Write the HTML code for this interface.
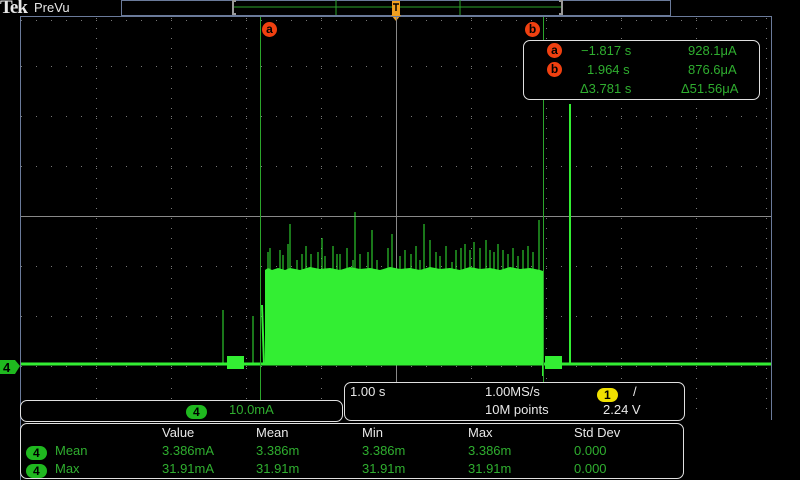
<!DOCTYPE html>
<html><head><meta charset="utf-8"><style>
body{margin:0;background:#000;width:800px;height:480px;overflow:hidden;position:relative;font-family:"Liberation Sans",sans-serif;}
.t{position:absolute;font-size:13px;white-space:nowrap;}
.g{color:#2fae2f}.w{color:#e8e8e8}
.box{position:absolute;border:1px solid #e0e0e0;border-radius:7px;}
.pill{display:inline-block;background:#1fb81f;color:#000;border-radius:7px;font-weight:bold;font-size:12px;line-height:12px;padding:0 5px;}
.cur{display:inline-block;width:15px;height:15px;border-radius:50%;background:#f04010;color:#000;font-weight:bold;font-size:12px;line-height:14px;text-align:center;}
</style></head><body>
<svg width="800" height="480" style="position:absolute;left:0;top:0">
 <rect x="121.5" y="0.5" width="549" height="15" fill="none" stroke="#6a7a9a"/>
 <line x1="233" y1="7" x2="562" y2="7" stroke="#2ba52b"/>
 <line x1="336" y1="0" x2="336" y2="15" stroke="#2ba52b"/>
 <line x1="460" y1="0" x2="460" y2="15" stroke="#2ba52b"/>
 <path d="M236 1h-3v13h3M559 1h3v13h-3" fill="none" stroke="#999" stroke-width="2"/>
 <rect x="392" y="1" width="8" height="14" fill="#f0a020"/>
 <path d="M391 15h10l-5 6z" fill="#f0a020"/>
 <path d="M393 4h6M396 4v7" stroke="#000" stroke-width="1.5"/>
 <path d="M20.5 480V16.5H771.5V420" fill="none" stroke="#6a7a9a"/>
 <g stroke="#777" stroke-width="1">
  <g stroke-dasharray="1 14" >
   <line x1="21" y1="66.5" x2="771" y2="66.5"/><line x1="21" y1="116.5" x2="771" y2="116.5"/><line x1="21" y1="166.5" x2="771" y2="166.5"/><line x1="21" y1="266.5" x2="771" y2="266.5"/><line x1="21" y1="316.5" x2="771" y2="316.5"/><line x1="21" y1="366.5" x2="771" y2="366.5"/>
   <line x1="21" y1="20.5" x2="771" y2="20.5"/>
  </g>
  <g stroke-dasharray="1 9">
   <line x1="96.5" y1="18" x2="96.5" y2="416"/><line x1="171.5" y1="18" x2="171.5" y2="416"/><line x1="246.5" y1="18" x2="246.5" y2="416"/><line x1="321.5" y1="18" x2="321.5" y2="416"/><line x1="471.5" y1="18" x2="471.5" y2="416"/><line x1="546.5" y1="18" x2="546.5" y2="416"/><line x1="621.5" y1="18" x2="621.5" y2="416"/><line x1="696.5" y1="18" x2="696.5" y2="416"/><line x1="766.5" y1="18" x2="766.5" y2="416"/>
  </g>
  <line x1="21" y1="216.5" x2="771" y2="216.5" stroke="#888"/>
  <line x1="396.5" y1="17" x2="396.5" y2="420" stroke="#888"/>
 </g>
 <g stroke="#33ee33">
  <line x1="21" y1="364" x2="771" y2="364" stroke-width="3"/>
  <rect x="227" y="356" width="17" height="13" fill="#33ee33" stroke="none"/>
  <rect x="545" y="356" width="17" height="13" fill="#33ee33" stroke="none"/>
  <line x1="223" y1="310" x2="223" y2="364"/><line x1="253" y1="316" x2="253" y2="364"/>
  <line x1="262" y1="305" x2="264" y2="364" stroke-width="2"/>
  <line x1="570" y1="104" x2="570" y2="364" stroke-width="2"/>
  <line x1="543" y1="360" x2="543" y2="376" stroke-width="2"/>
  <path d="M265 364V270L268 268 272 270 278 268 285 270 290 268 300 270 310 267 320 269 330 268 340 270 350 267 360 269 370 268 380 270 390 267 400 269 410 268 420 270 430 267 440 269 450 268 460 270 470 267 480 269 490 268 500 270 510 267 520 269 530 268 540 270 543 271V364Z" fill="#33ee33" stroke="none"/>
  <path d="M268 252V270M270 248V270M280 250V270M283 255V270M288 244V270M290 224V270M297 260V270M302 254V270M306 246V270M311 254V270M318 252V270M322 238V270M325 256V270M333 246V270M337 254V270M340 254V270M347 248V270M353 260V270M355 212V270M360 254V270M368 252V270M372 230V270M377 260V270M388 248V270M392 234V270M400 256V270M405 250V270M411 254V270M416 246V270M420 260V270M424 224V270M430 240V270M436 252V270M440 256V270M446 246V270M452 262V270M456 250V270M461 248V270M465 244V270M470 250V270M474 242V270M480 248V270M486 240V270M490 250V270M494 252V270M498 244V270M503 250V270M508 254V270M513 248V270M518 256V270M523 250V270M528 246V270M533 252V270M539 220V270" stroke-width="1"/>
 </g>
 <line x1="260.5" y1="17" x2="260.5" y2="400" stroke="#2ba52b"/>
 <line x1="543.5" y1="17" x2="543.5" y2="382" stroke="#2ba52b"/>
 <path d="M0 360h15l5 6-5 8h-15z" fill="#1fb81f"/>
 <text x="3" y="372" font-family="Liberation Sans" font-weight="bold" font-size="13" fill="#000">4</text>
</svg>
<div class="t w" style="left:0px;top:-3px;font-size:19px;font-weight:bold;letter-spacing:-1px;font-family:'Liberation Serif',serif">Tek</div>
<div class="t w" style="left:34px;top:0px;font-size:13px">PreVu</div>
<div style="position:absolute;left:262px;top:22px" class="cur">a</div>
<div style="position:absolute;left:525px;top:22px" class="cur">b</div>
<div class="box" style="left:523px;top:40px;width:235px;height:58px;background:#000"></div>
<div style="position:absolute;left:547px;top:43px" class="cur">a</div>
<div style="position:absolute;left:547px;top:62px" class="cur">b</div>
<div class="t g" style="left:581px;top:43px">−1.817 s</div>
<div class="t g" style="left:587px;top:62px">1.964 s</div>
<div class="t g" style="left:580px;top:81px">Δ3.781 s</div>
<div class="t g" style="left:688px;top:43px">928.1μA</div>
<div class="t g" style="left:688px;top:62px">876.6μA</div>
<div class="t g" style="left:681px;top:81px">Δ51.56μA</div>
<div class="box" style="left:20px;top:400px;width:321px;height:20px;background:#000"></div>
<div style="position:absolute;left:186px;top:403px"><span class="pill" style="padding:1px 7px">4</span></div>
<div class="t g" style="left:229px;top:402px">10.0mA</div>
<div class="box" style="left:344px;top:382px;width:339px;height:37px;background:#000"></div>
<div class="t w" style="left:350px;top:384px">1.00 s</div>
<div class="t w" style="left:485px;top:384px">1.00MS/s</div>
<div class="t w" style="left:485px;top:402px">10M points</div>
<div style="position:absolute;left:597px;top:386px"><span class="pill" style="background:#f0e000;padding:1px 7px">1</span></div>
<div class="t w" style="left:633px;top:384px">/</div>
<div class="t w" style="left:603px;top:402px">2.24 V</div>
<div class="box" style="left:20px;top:423px;width:662px;height:54px"></div>
<div class="t w" style="left:162px;top:425px">Value</div>
<div class="t w" style="left:256px;top:425px">Mean</div>
<div class="t w" style="left:362px;top:425px">Min</div>
<div class="t w" style="left:468px;top:425px">Max</div>
<div class="t w" style="left:574px;top:425px">Std Dev</div>
<div style="position:absolute;left:26px;top:444px"><span class="pill" style="padding:1px 7px">4</span></div>
<div style="position:absolute;left:26px;top:462px"><span class="pill" style="padding:1px 7px">4</span></div>
<div class="t g" style="left:55px;top:443px">Mean</div>
<div class="t g" style="left:55px;top:461px">Max</div>
<div class="t g" style="left:162px;top:443px">3.386mA</div><div class="t g" style="left:256px;top:443px">3.386m</div><div class="t g" style="left:362px;top:443px">3.386m</div><div class="t g" style="left:468px;top:443px">3.386m</div><div class="t g" style="left:574px;top:443px">0.000</div>
<div class="t g" style="left:162px;top:461px">31.91mA</div><div class="t g" style="left:256px;top:461px">31.91m</div><div class="t g" style="left:362px;top:461px">31.91m</div><div class="t g" style="left:468px;top:461px">31.91m</div><div class="t g" style="left:574px;top:461px">0.000</div>
</body></html>
